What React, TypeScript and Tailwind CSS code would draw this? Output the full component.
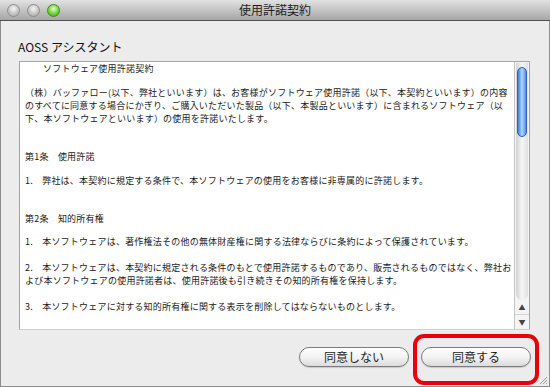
import React from "react";

const lines = {
  para: [
    "（株）バッファロー(以下、弊社といいます）は、お客様がソフトウェア使用許諾（以下、本契約といいます）の内容",
    "のすべてに同意する場合にかぎり、ご購入いただいた製品（以下、本製品といいます）に含まれるソフトウェア（以",
    "下、本ソフトウェアといいます）の使用を許諾いたします。",
  ],
};

function TrafficLight({ green }: { green?: boolean }) {
  return green ? (
    <div className="w-[13px] h-[13px] rounded-full border border-[#3d8a22] bg-[radial-gradient(circle_at_50%_35%,#e2ffc4,#74d23e_55%,#3c961a)]" />
  ) : (
    <div className="w-[13px] h-[13px] rounded-full border border-[#8e8e8e] bg-[radial-gradient(circle_at_50%_35%,#f6f6f6,#c4c4c4_55%,#a4a4a4)]" />
  );
}

function AquaButton({ label, className }: { label: string; className?: string }) {
  return (
    <button
      className={
        "h-[20px] rounded-full border border-[#7c7c7c] bg-gradient-to-b from-[#ffffff] via-[#f3f3f3] to-[#dcdcdc] text-[12px] leading-[18px] text-[#1e1e1e] shadow-[0_1px_1px_rgba(0,0,0,0.15)] " +
        (className ?? "")
      }
    >
      {label}
    </button>
  );
}

function Scrollbar() {
  return (
    <div className="w-[15px] flex flex-col border-l border-[#c4c4c4] bg-[#f4f4f4]">
      <div className="flex-1 mx-[1px] mt-[1px] rounded-b-full bg-gradient-to-r from-[#d2d2d2] via-[#f6f6f6] to-[#e0e0e0] px-[1px] pt-[4px]">
        <div className="h-[70px] rounded-full border border-[#2f62b8] bg-gradient-to-r from-[#3c7ce0] via-[#b2d6ff] to-[#4d8de6]" />
      </div>
      <div className="h-[15px] flex items-center justify-center border-b border-[#d4d4d4] text-[7px] leading-none text-[#444]">
        ▲
      </div>
      <div className="h-[14px] flex items-center justify-center text-[7px] leading-none text-[#444]">
        ▼
      </div>
    </div>
  );
}

export default function App() {
  return (
    <div className="relative w-[550px] h-[387px] overflow-hidden flex flex-col bg-[#ececec] font-['Noto_Sans_CJK_JP','Noto_Sans',sans-serif]">
      {/* Title bar */}
      <div className="relative h-[21px] flex items-center border-b border-[#4f4f4f] bg-gradient-to-b from-[#e2e2e2] to-[#a6a6a6]">
        <div className="flex items-center gap-[7px] pl-[7px]">
          <TrafficLight />
          <TrafficLight />
          <TrafficLight green />
        </div>
        <div className="absolute inset-0 flex items-center justify-center text-[12px] text-[#1e1e1e]">
          使用許諾契約
        </div>
      </div>

      {/* Body */}
      <div className="flex-1 flex flex-col border-l border-r border-b border-[#8c8c8c]">
        <div className="pl-[17px] pt-[18px] text-[12px] leading-[15px] text-[#111]">AOSS アシスタント</div>

        <div className="ml-[18px] mr-[19px] mt-[7px] h-[269px] flex border border-[#a6a6a6] border-b-[#cfcfcf] bg-white">
          <div className="flex-1 overflow-hidden pl-[5px] text-[9px] leading-[13px] tracking-[0.22px] text-[#1a1a1a] whitespace-nowrap">
            <div className="pl-[18px]">ソフトウェア使用許諾契約</div>
            <div className="mt-[11px]">
              {lines.para.map((l) => (
                <div key={l}>{l}</div>
              ))}
            </div>
            <div className="mt-[25px]">第1条　使用許諾</div>
            <div className="mt-[11px]">1.　弊社は、本契約に規定する条件で、本ソフトウェアの使用をお客様に非専属的に許諾します。</div>
            <div className="mt-[25px]">第2条　知的所有権</div>
            <div className="mt-[10px]">1.　本ソフトウェアは、著作権法その他の無体財産権に関する法律ならびに条約によって保護されています。</div>
            <div className="mt-[13px]">
              <div>2.　本ソフトウェアは、本契約に規定される条件のもとで使用許諾するものであり、販売されるものではなく、弊社お</div>
              <div>よび本ソフトウェアの使用許諾者は、使用許諾後も引き続きその知的所有権を保持します。</div>
            </div>
            <div className="mt-[13px]">3.　本ソフトウェアに対する知的所有権に関する表示を削除してはならないものとします。</div>
          </div>
          <Scrollbar />
        </div>

        <div className="mt-[17px] mr-[18px] flex justify-end gap-[12px]">
          <AquaButton label="同意しない" className="w-[110px]" />
          <AquaButton label="同意する" className="w-[110px]" />
        </div>
      </div>

      {/* Red highlight */}
      <div className="absolute left-[413px] top-[334px] w-[126px] h-[51px] rounded-[11px] border-[4px] border-[#e8000b]" />

      {/* Resize grip */}
      <svg className="absolute right-[2px] bottom-[2px]" width="9" height="9" viewBox="0 0 9 9">
        <path d="M1 8 L8 1 M4 8 L8 4 M7 8 L8 7" stroke="#9a9a9a" strokeWidth="1" />
      </svg>
    </div>
  );
}
